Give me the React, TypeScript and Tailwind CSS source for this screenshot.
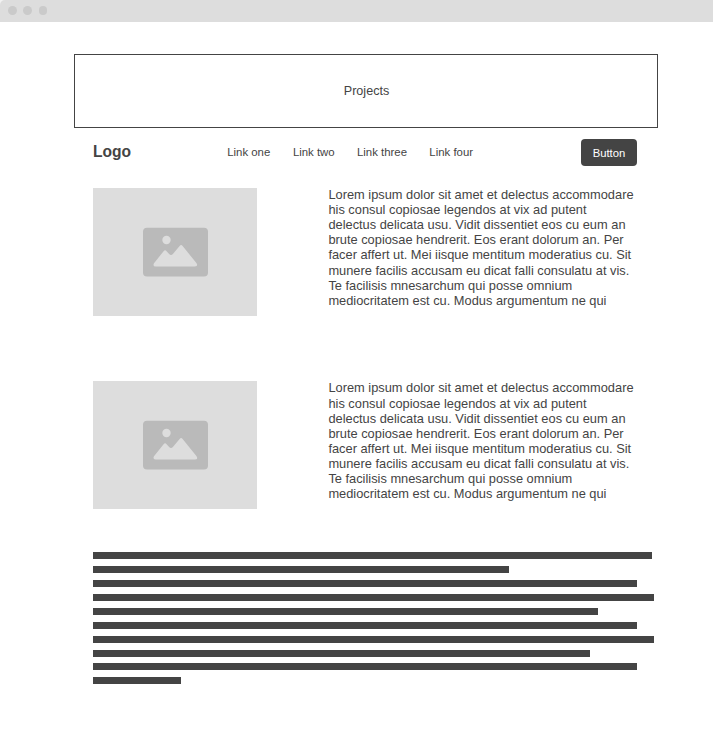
const links = [
  { label: "Link one", width: "w-[65.7px]" },
  { label: "Link two", width: "w-[64.1px]" },
  { label: "Link three", width: "w-[72.4px]" },
  { label: "Link four", width: "w-[46px]" },
];

const lines = [
  "Lorem ipsum dolor sit amet et delectus accommodare",
  "his consul copiosae legendos at vix ad putent",
  "delectus delicata usu. Vidit dissentiet eos cu eum an",
  "brute copiosae hendrerit. Eos erant dolorum an. Per",
  "facer affert ut. Mei iisque mentitum moderatius cu. Sit",
  "munere facilis accusam eu dicat falli consulatu at vis.",
  "Te facilisis mnesarchum qui posse omnium",
  "mediocritatem est cu. Modus argumentum ne qui",
];

const bars = [
  "w-[559px]",
  "w-[416px] mt-[7px]",
  "w-[544px] mt-[7px]",
  "w-[561px] mt-[7px]",
  "w-[505px] mt-[7px]",
  "w-[544px] mt-[7px]",
  "w-[561px] mt-[7px]",
  "w-[497px] mt-[7px]",
  "w-[544px] mt-[6px]",
  "w-[88px] mt-[7px]",
];

function ImagePlaceholder() {
  return (
    <div className="h-32 w-[164px] shrink-0 bg-[#ddd]">
      <svg width="164" height="128" viewBox="0 0 164 128">
        <rect x="50" y="39.7" width="65" height="48.7" rx="4" fill="#bababa" />
        <circle cx="73.5" cy="52" r="4.2" fill="#ddd" />
        <path
          d="M61 75.2 L70.6 63.2 Q72.1 61.2 73.6 63.2 L76.1 66 Q78 68 79.9 66 L86.6 58 Q88.1 56 89.6 58 L103.4 75 Q105.6 78.5 101.8 78.5 L62.8 78.5 Q59.4 78.3 61 75.2 Z"
          fill="#ddd"
        />
      </svg>
    </div>
  );
}

function Project({ offset }: { offset: string }) {
  return (
    <section className="flex h-32 gap-[71.4px]">
      <ImagePlaceholder />
      <div className={"whitespace-nowrap text-[12.84px] leading-[15.15px] " + offset}>
        {lines.map((line) => (
          <p key={line}>{line}</p>
        ))}
      </div>
    </section>
  );
}

export default function App() {
  return (
    <div className="h-[742px] w-[713px] overflow-hidden bg-white font-['Liberation_Sans',Arial,sans-serif] text-[#444]">
      <div className="bg-[#f2f2f2]">
        <div className="flex h-[22px] items-center gap-[6.7px] rounded-tl-[5px] bg-[#ddd] pl-2">
          <span className="mb-px size-[8.7px] rounded-full bg-[#cacaca]" />
          <span className="mb-px size-[8.7px] rounded-full bg-[#cacaca]" />
          <span className="mb-px size-[8.7px] rounded-full bg-[#cacaca]" />
        </div>
      </div>
      <header className="mt-8 ml-[74px] flex h-[74px] w-[584px] items-center justify-center border border-[#444] pl-px text-[12.6px]">
        Projects
      </header>
      <main className="ml-[93px] w-[561px]">
        <nav className="mt-[11px] flex h-[27px] w-[544px] items-center">
          <strong className="mb-0.5 w-[134.2px] text-[15.6px] leading-[18px]">Logo</strong>
          <div className="mb-0.5 flex text-[11.4px] leading-4">
            {links.map((link) => (
              <a key={link.label} className={"whitespace-nowrap " + link.width}>
                {link.label}
              </a>
            ))}
          </div>
          <button className="ml-auto flex h-[27px] w-14 items-center justify-center rounded-[4px] bg-[#444] pt-px text-[11.3px] text-white">
            Button
          </button>
        </nav>
        <div className="mt-[22px] flex flex-col gap-[65px]">
          <Project offset="-mt-[1.25px]" />
          <Project offset="-mt-[0.65px]" />
        </div>
        <div className="mt-[43px]">
          {bars.map((bar, index) => (
            <div key={index} className={"h-[7px] bg-[#444] " + bar} />
          ))}
        </div>
      </main>
    </div>
  );
}
